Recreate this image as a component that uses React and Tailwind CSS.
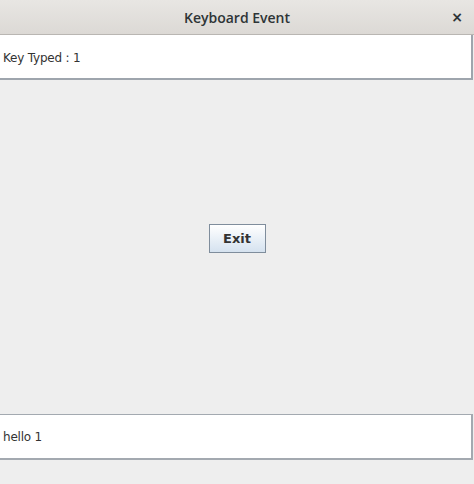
export default function App() {
    return (
        <div className="w-[474px] h-[484px] flex flex-col bg-[#eeeeee] overflow-hidden" style={{ fontFamily: '"DejaVu Sans", sans-serif' }}>
            {/* Window title bar */}
            <div className="h-[35px] shrink-0 flex items-center justify-center relative bg-gradient-to-b from-[#e8e6e3] to-[#dcd9d5] border-b border-[#b9b6b2]">
                <span className="text-[14px] font-semibold text-[#2e3436] pt-[1px]" style={{ fontFamily: '"Open Sans", sans-serif' }}>
                    Keyboard Event
                </span>
                <span className="absolute right-[11px] top-[10px] text-[14px] font-bold text-[#2e3436] leading-none">×</span>
            </div>

            {/* Top text field */}
            <div className="h-[45px] shrink-0 w-[473px] bg-white border-r-2 border-b-2 border-[#9ea5ad] flex items-center pl-[3px] pt-[3px] text-[12px] tracking-[-0.2px] text-[#333333]">
                Key Typed : 1
            </div>

            {/* Center panel */}
            <div className="flex-1 flex justify-center pt-[144px]">
                <button className="w-[57px] h-[29px] border border-[#7f8d9c] bg-gradient-to-b from-white to-[#d5e2ef] text-[13px] font-bold text-[#333333]">
                    Exit
                </button>
            </div>

            {/* Bottom text field */}
            <div className="h-[46px] shrink-0 w-[473px] bg-white border-t border-r-2 border-b-2 border-[#a3a9b0] flex items-center pl-[3px] text-[12px] tracking-[-0.2px] text-[#333333]">
                hello 1
            </div>
            <div className="h-[24px] shrink-0" />
        </div>
    );
}
